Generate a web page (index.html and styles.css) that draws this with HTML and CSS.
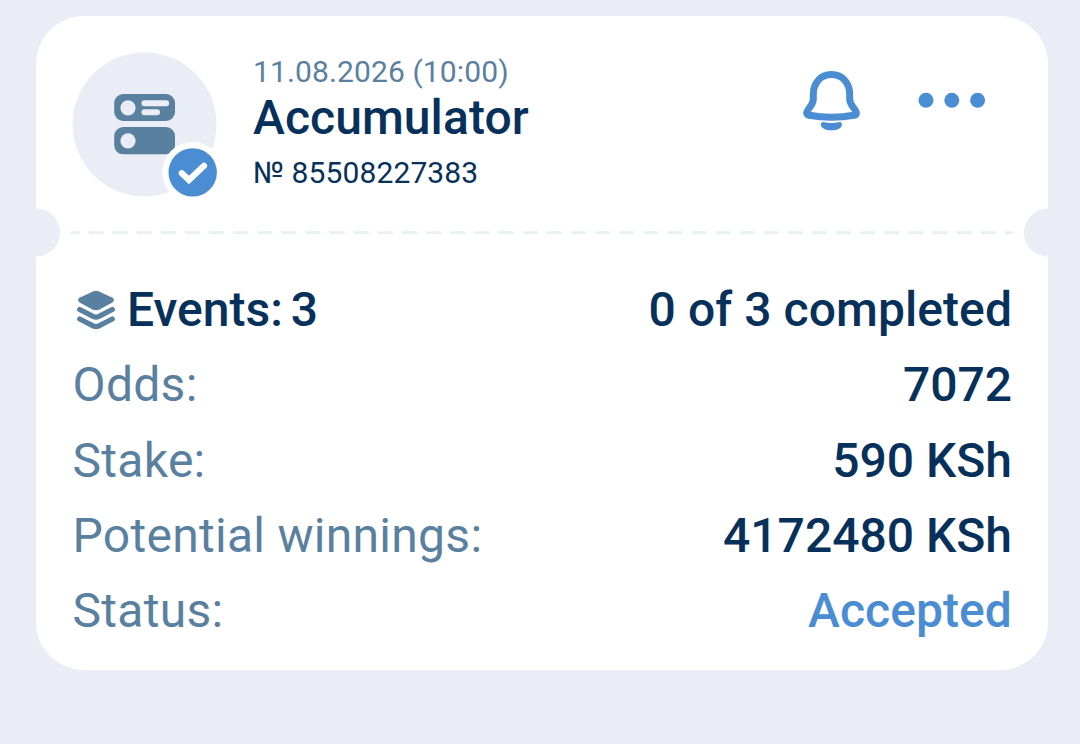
FILE: index.html
```html
<!DOCTYPE html>
<html lang="en">
<head>
<meta charset="utf-8">
<title>Bet slip</title>
<link rel="stylesheet" href="styles.css">
</head>
<body>
<main class="card">
  <header class="header">
    <svg class="avatar" viewBox="0 0 146 146" aria-hidden="true">
      <circle cx="72.5" cy="72.3" r="72" fill="#eaedf5"/>
      <rect x="42.2" y="42" width="60.8" height="27" rx="9" fill="#5a80a0"/>
      <rect x="42.2" y="75" width="60.8" height="27.3" rx="9" fill="#5a80a0"/>
      <circle cx="56" cy="55.8" r="7.6" fill="#eaedf5"/>
      <circle cx="56" cy="88.8" r="7.6" fill="#eaedf5"/>
      <path d="M72.400 51.300H94.200M72.400 60.200H85" stroke="#eaedf5" stroke-width="6" stroke-linecap="round"/>
      <circle cx="120.700" cy="120.400" r="30.500" fill="#fff"/>
      <circle cx="120.700" cy="120.400" r="24.200" fill="#4a8dd3"/>
      <path d="M109.800 121.200L117 128L132 113.800" fill="none" stroke="#fff" stroke-width="6.200" stroke-linecap="round"/>
    </svg>
    <div class="heading">
      <div class="date">11.08.2026 (10:00)</div>
      <h1 class="title">Accumulator</h1>
      <div class="number">№ 85508227383</div>
    </div>
    <div class="actions">
      <svg class="bell" viewBox="0 0 58 62" aria-hidden="true">
        <path d="M28.500 3.600C17 3.600 10.300 12.500 10.300 23.500V28C10.300 34.500 4.800 37 3.800 41.300C3.400 43.300 4.500 44 6 44.300C20 46.800 37 46.800 51 44.300C52.500 44 53.600 43.300 53.200 41.300C52.200 37 46.700 34.500 46.700 28V23.500C46.700 12.500 40 3.600 28.500 3.600Z" fill="none" stroke="#4a8dd3" stroke-width="7"/>
        <path d="M20.300 51Q28.500 52.800 36.700 51Q39 51 39 53.300C38.700 57.500 34.500 59.300 28.500 59.300S18 57.500 17.700 53.300Q18 51 20.300 51Z" fill="#4a8dd3"/>
      </svg>
      <svg class="dots" viewBox="0 0 68 16" aria-hidden="true" fill="#4a8dd3">
        <circle cx="8" cy="8.200" r="7.500"/><circle cx="33.800" cy="8.200" r="7.500"/><circle cx="59.600" cy="8.200" r="7.500"/>
      </svg>
    </div>
  </header>
  <svg class="divider" viewBox="0 0 1012 49" aria-hidden="true">
    <path d="M0 .5A24 24 0 0 1 0 48.500ZM1012 .5A24 24 0 0 0 1012 48.500Z" fill="#eaedf5"/>
    <path d="M35 24.600H977" stroke="#e8f1f1" stroke-width="2.800" stroke-dasharray="15 9.110" stroke-dashoffset="6.500"/>
  </svg>
  <section class="rows">
    <div class="row">
      <span class="events">
        <svg class="layers" viewBox="0 0 38 40" aria-hidden="true">
          <path d="M16.500 1.200Q19 .2 21.500 1.200L35 7.500Q39 10 35 12.700L22.500 19.500Q19 21 15.500 19.500L3 12.700Q-1 10 3 7.500Z" fill="#5a80a0"/>
          <path d="M2.700 19.500L16 26.400Q19 27.700 22 26.400L35.300 19.500M2.700 29L16 35.900Q19 37.200 22 35.900L35.300 29" fill="none" stroke="#5a80a0" stroke-width="5.200" stroke-linecap="round"/>
        </svg>
        <span class="value">Events:</span><span class="value count">3</span>
      </span>
      <span class="value completed">0 of 3 completed</span>
    </div>
    <div class="row"><span class="label">Odds:</span><span class="value">7072</span></div>
    <div class="row"><span class="label">Stake:</span><span class="value">590 KSh</span></div>
    <div class="row"><span class="label">Potential winnings:</span><span class="value">4172480 KSh</span></div>
    <div class="row"><span class="label">Status:</span><span class="value accepted">Accepted</span></div>
  </section>
</main>
</body>
</html>
```
FILE: styles.css
```css
* { box-sizing: border-box; }

body {
  margin: 0;
  padding: 16px 32px 0 36px;
  height: 744px;
  background: #eaedf5;
  color: #07305a;
  font-family: Roboto, "Liberation Sans", sans-serif;
}

svg { display: block; flex: none; }

.card {
  height: 653.500px;
  background: #fff;
  border-radius: 48px;
  overflow: hidden;
}

.header {
  display: flex;
  height: 192px;
  padding: 36px 62px 0 36px;
}

.avatar { width: 146px; height: 146px; }

.heading {
  padding-top: 2px;
  margin-left: 35px;
  white-space: nowrap;
}

.date, .number { font-size: 30px; line-height: 36px; letter-spacing: 0.120px; }
.date { color: #5a80a0; }
.title { margin: 0; font-size: 48px; line-height: 56px; font-weight: 500; letter-spacing: 0.080px; }
.number { margin-top: 9px; }

.actions {
  display: flex;
  margin-left: auto;
  padding-top: 19px;
}

.bell { width: 58px; height: 62px; }
.dots { width: 68px; height: 16px; margin: 21px 0 0 57px; }

.divider { width: 1012px; height: 49px; }

.rows { padding: 14.900px 36px 0; }

.row {
  display: flex;
  justify-content: space-between;
  height: 75.400px;
  font-size: 48px;
  line-height: 75.400px;
  white-space: nowrap;
}

.events { display: flex; }
.layers { width: 38px; height: 40px; margin: 18.500px 12px 0 5px; }
.label { padding-left: 0.600px; color: #5a80a0; letter-spacing: 0.280px; }
.value { font-weight: 500; }
.count { margin-left: 8px; }
.completed, .accepted { letter-spacing: 0.070px; }
.accepted { color: #4a8dd3; }
```
